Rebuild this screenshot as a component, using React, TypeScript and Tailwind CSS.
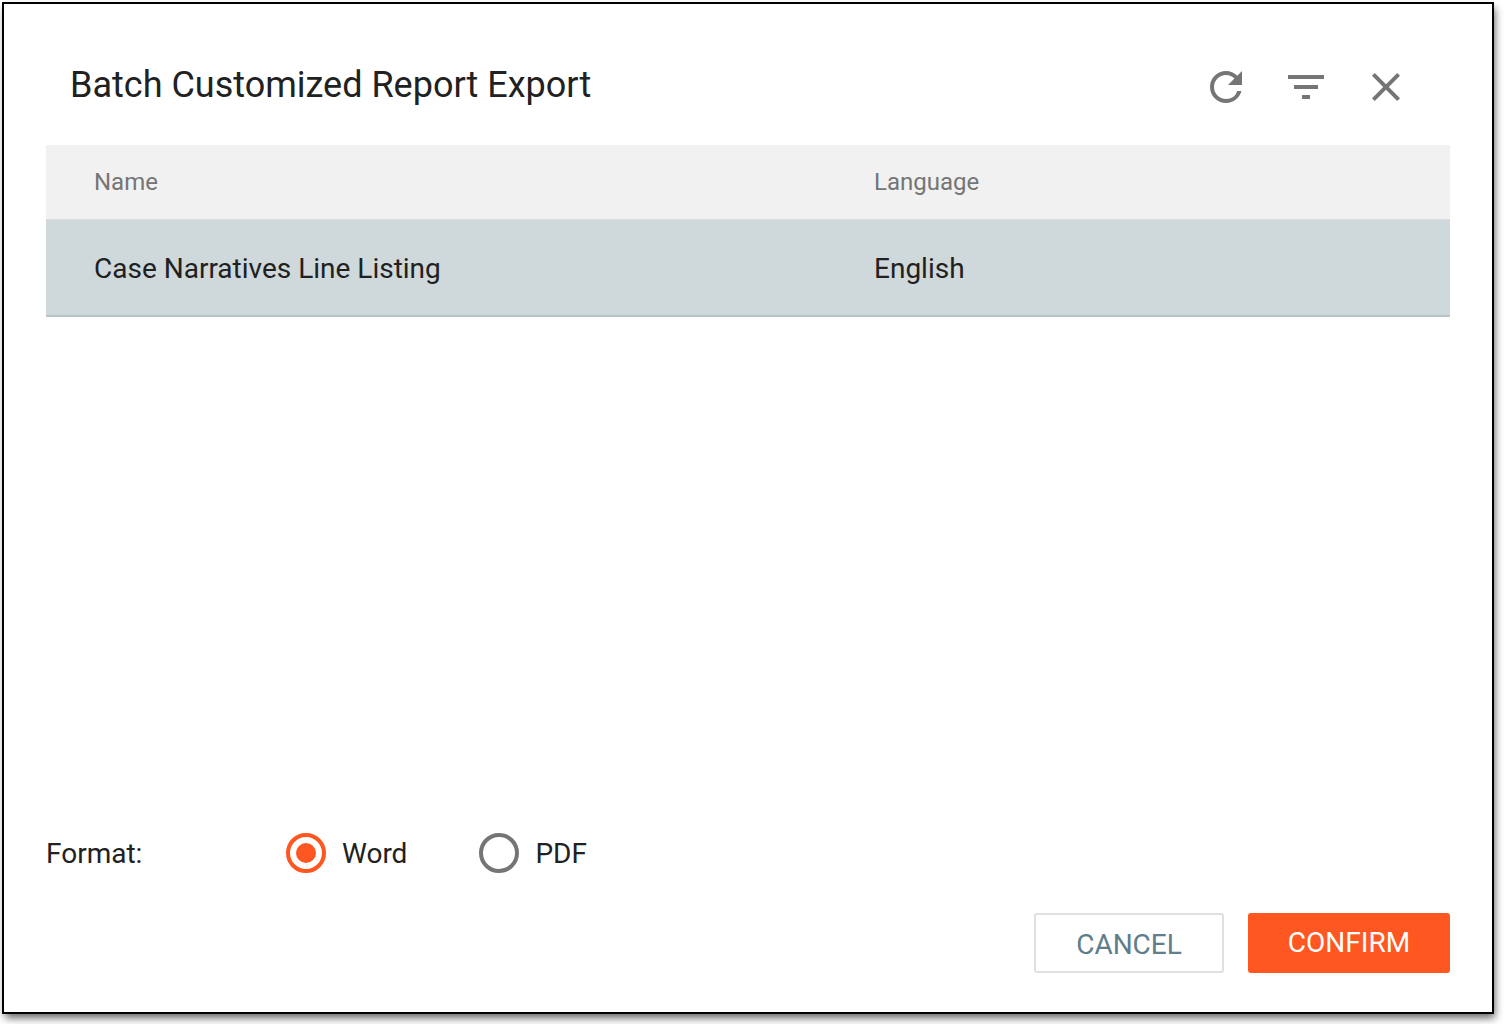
export default function App() {
  return (
    <div className="w-[1504px] h-[1024px] bg-white pt-[2px] pl-[2px] font-['Roboto',sans-serif] overflow-hidden">
      <div className="w-[1492px] h-[1012px] border-2 border-black bg-white shadow-[2px_5px_8px_-1px_rgba(0,0,0,0.6)] flex flex-col pl-[42px] pr-[42px]">
        <div className="h-[141px] flex shrink-0 justify-between pl-[24px] pr-[40px]">
          <h1 className="mt-[56px] h-[50px] text-[36px] leading-[50px] font-normal text-[#212121]">Batch Customized Report Export</h1>
          <div className="flex gap-[32px] mt-[59px] h-[48px] text-[#757575]">
            <svg viewBox="0 0 24 24" className="w-[48px] h-[48px]" fill="currentColor"><path d="M17.65 6.35A7.958 7.958 0 0 0 12 4c-4.42 0-7.99 3.58-7.99 8s3.57 8 7.99 8c3.73 0 6.84-2.55 7.73-6h-2.08A5.99 5.99 0 0 1 12 18c-3.31 0-6-2.69-6-6s2.69-6 6-6c1.66 0 3.14.69 4.22 1.78L13 11h7V4l-2.35 2.35z" /></svg>
            <svg viewBox="0 0 24 24" className="w-[48px] h-[48px]" fill="currentColor"><path d="M10 18h4v-2h-4v2zM3 6v2h18V6H3zm3 7h12v-2H6v2z" /></svg>
            <svg viewBox="0 0 24 24" className="w-[48px] h-[48px]" fill="currentColor"><path d="M19 6.41 17.59 5 12 10.59 6.41 5 5 6.41 10.59 12 5 17.59 6.41 19 12 13.41 17.59 19 19 17.59 13.41 12z" /></svg>
          </div>
        </div>
        <div className="h-[75px] shrink-0 flex items-center bg-[#f1f1f1] border-b border-[#dcdcdc] text-[24px] text-[#757575]">
          <div className="w-[828px] pl-[48px]">Name</div>
          <div>Language</div>
        </div>
        <div className="h-[97px] shrink-0 flex items-center pt-[2px] bg-[#cfd8da] border-b-2 border-[#b8c4c6] text-[28px] text-[#212121]">
          <div className="w-[828px] pl-[48px]">Case Narratives Line Listing</div>
          <div>English</div>
        </div>
        <div className="flex-1" />
        <div className="flex items-center h-[40px] text-[28px] text-[#212121] mb-[40px]">
          <span className="w-[240px] pt-[2px]">Format:</span>
          <span className="flex items-center gap-[16px] mr-[72px]">
            <span className="w-[40px] h-[40px] rounded-full border-[4px] border-[#ff5722] flex items-center justify-center">
              <span className="w-[20px] h-[20px] rounded-full bg-[#ff5722]" />
            </span>
            <span className="pt-[2px]">Word</span>
          </span>
          <span className="flex items-center gap-[16px]">
            <span className="w-[40px] h-[40px] rounded-full border-[4px] border-[#757575]" />
            <span className="pt-[2px]">PDF</span>
          </span>
        </div>
        <div className="flex justify-end gap-[24px] mb-[39px]">
          <button className="w-[190px] h-[60px] pt-[4px] rounded-[3px] border-2 border-[#e0e0e0] bg-white text-[28px] text-[#607d8b]">CANCEL</button>
          <button className="w-[202px] h-[60px] rounded-[3px] bg-[#ff5722] text-[28px] text-white">CONFIRM</button>
        </div>
      </div>
    </div>
  );
}
